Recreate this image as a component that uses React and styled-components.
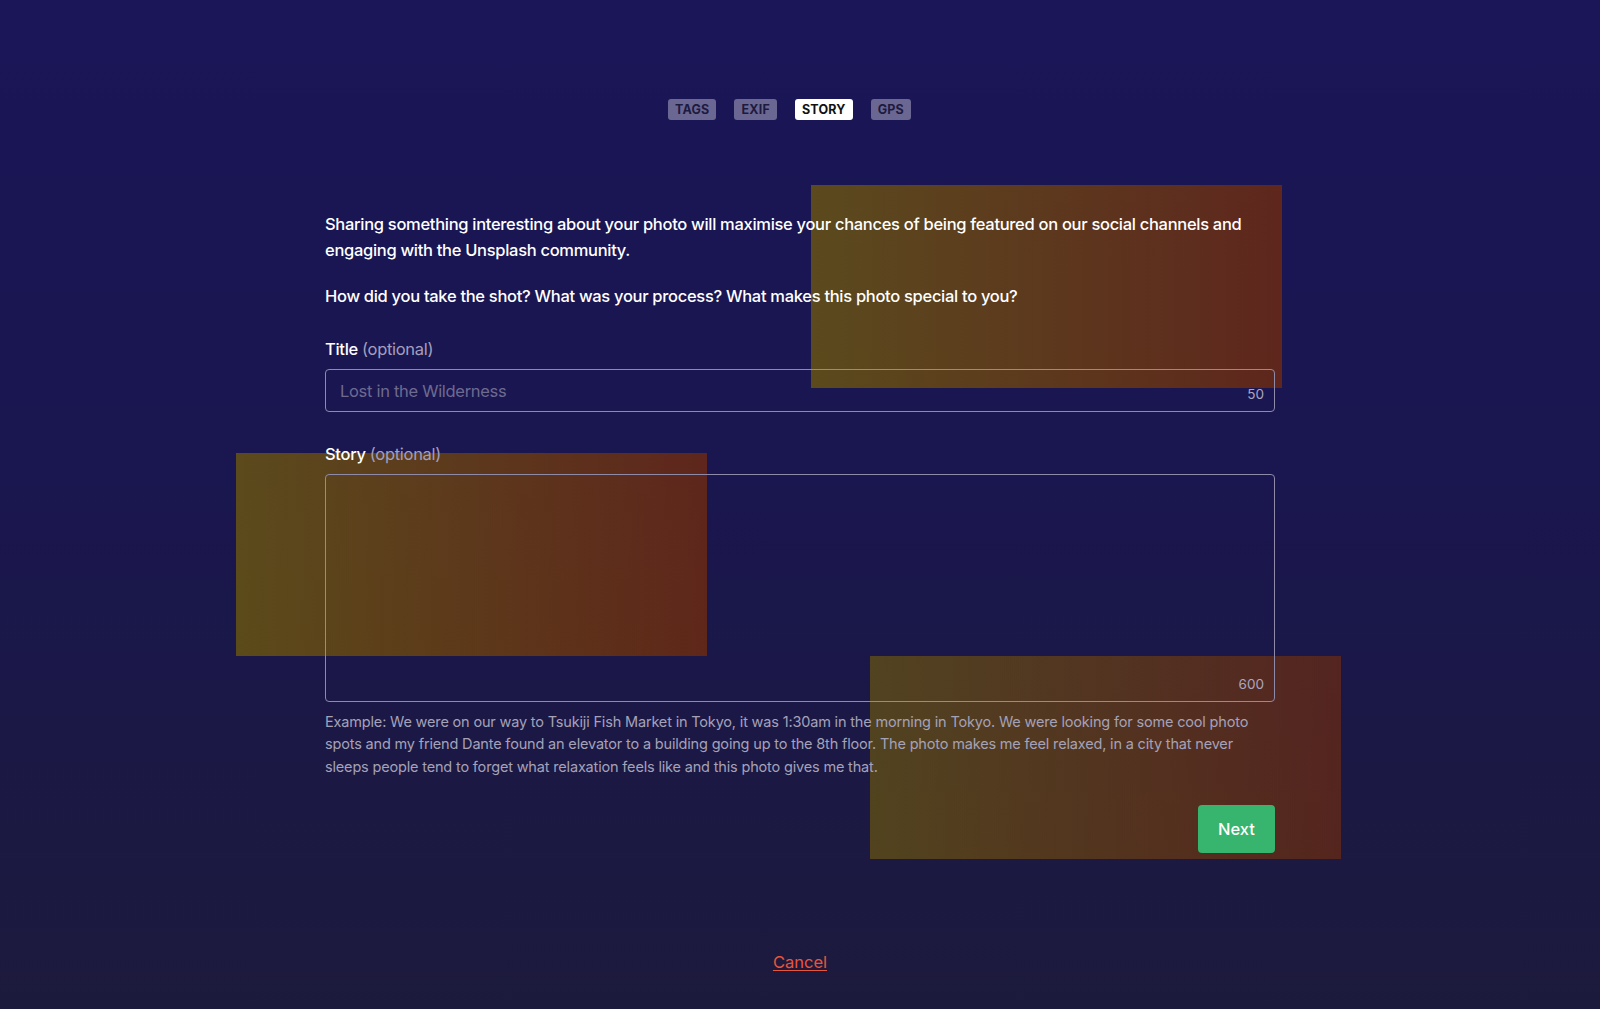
import React from "react";
import styled, { createGlobalStyle } from "styled-components";

const Global = createGlobalStyle`
  html, body { margin: 0; padding: 0; }
  body {
    font-family: Inter, "Noto Sans", "Liberation Sans", sans-serif;
    -webkit-font-smoothing: antialiased;
    background: #1b1745;
  }
  * { box-sizing: border-box; }
`;

const Page = styled.div`
  position: relative;
  min-height: 1009px;
  overflow: hidden;
  display: flex;
  flex-direction: column;
  align-items: center;
  background: linear-gradient(180deg, #1a1658 0%, #1a1650 45%, #1c1a3c 100%);
  color: #ffffff;
`;

const Decor = styled.div`
  position: absolute;
  z-index: 0;
  width: 471px;
  height: 203px;
  top: ${(p) => p.$top}px;
  left: calc(50% + ${(p) => p.$offset}px);
  background: linear-gradient(90deg, rgba(126, 102, 0, ${(p) => p.$alpha}) 0%, rgba(131, 47, 0, ${(p) => p.$alpha}) 100%);
`;

const Tabs = styled.nav`
  position: relative;
  z-index: 1;
  margin-top: 99px;
  margin-right: 21px;
  display: flex;
  gap: 18px;
`;

const Tab = styled.span`
  display: inline-flex;
  align-items: center;
  justify-content: center;
  height: 21px;
  padding: 0 7px;
  border-radius: 3px;
  font-size: 12.5px;
  font-weight: 700;
  letter-spacing: 0.2px;
  text-transform: uppercase;
  background: ${(p) => (p.$active ? "#ffffff" : "#6b6793")};
  color: ${(p) => (p.$active ? "#111111" : "#1d1a40")};
`;

const Form = styled.main`
  position: relative;
  z-index: 1;
  width: 950px;
  margin-top: 91px;
  display: flex;
  flex-direction: column;
`;

const Intro = styled.p`
  margin: 0 0 ${(p) => p.$gap}px;
  font-size: 16.5px;
  line-height: 26px;
  font-weight: 500;
  letter-spacing: -0.3px;
  color: #ffffff;
`;

const Label = styled.label`
  display: block;
  font-size: 16.5px;
  line-height: 26px;
  font-weight: 500;
  letter-spacing: -0.3px;
  color: #ffffff;
  margin-top: ${(p) => p.$top}px;
  margin-bottom: 7px;
`;

const Optional = styled.span`
  font-weight: 400;
  color: #a39fbd;
`;

const Field = styled.div`
  position: relative;
`;

const TextInput = styled.input`
  display: block;
  width: 100%;
  height: 43px;
  padding: 0 48px 0 14px;
  border: 1px solid #8e8aa8;
  border-radius: 4px;
  background: transparent;
  font-family: inherit;
  font-size: 16.5px;
  letter-spacing: -0.3px;
  color: #ffffff;
  outline: none;
  &::placeholder { color: #6e6a8f; }
`;

const TextArea = styled.textarea`
  display: block;
  width: 100%;
  height: 228px;
  padding: 12px 14px;
  border: 1px solid #8e8aa8;
  border-radius: 4px;
  background: transparent;
  font-family: inherit;
  font-size: 16.5px;
  color: #ffffff;
  resize: none;
  outline: none;
`;

const Counter = styled.span`
  position: absolute;
  right: 11px;
  bottom: ${(p) => p.$bottom}px;
  font-size: 13.5px;
  line-height: 16px;
  color: #aaa7c0;
`;

const Example = styled.p`
  margin: 9px 0 0;
  font-size: 14.5px;
  line-height: 22.4px;
  letter-spacing: -0.17px;
  color: #a5a2b8;
`;

const Actions = styled.div`
  display: flex;
  justify-content: flex-end;
  margin-top: 27px;
`;

const NextButton = styled.button`
  height: 48px;
  width: 77px;
  border: none;
  border-radius: 4px;
  background: #37b46d;
  color: #ffffff;
  font-family: inherit;
  font-size: 16.5px;
  font-weight: 500;
  cursor: pointer;
`;

const Cancel = styled.a`
  position: relative;
  z-index: 1;
  margin-top: 96px;
  font-size: 16.5px;
  line-height: 26px;
  color: #ea553a;
  text-decoration: underline;
  text-underline-offset: 2px;
  cursor: pointer;
`;

export default function App() {
  return (
    <>
      <Global />
      <Page>
        <Decor $top={185} $offset={11} $alpha={0.65} />
        <Decor $top={453} $offset={-564} $alpha={0.65} />
        <Decor $top={656} $offset={70} $alpha={0.55} />

        <Tabs>
          <Tab>Tags</Tab>
          <Tab>Exif</Tab>
          <Tab $active>Story</Tab>
          <Tab>GPS</Tab>
        </Tabs>

        <Form>
          <Intro $gap={20}>
            Sharing something interesting about your photo will maximise your chances of being featured on our social
            channels and engaging with the Unsplash community.
          </Intro>
          <Intro $gap={0}>How did you take the shot? What was your process? What makes this photo special to you?</Intro>

          <Label $top={27}>
            Title <Optional>(optional)</Optional>
          </Label>
          <Field>
            <TextInput placeholder="Lost in the Wilderness" />
            <Counter $bottom={10}>50</Counter>
          </Field>

          <Label $top={29}>
            Story <Optional>(optional)</Optional>
          </Label>
          <Field>
            <TextArea />
            <Counter $bottom={10}>600</Counter>
          </Field>

          <Example>
            Example: We were on our way to Tsukiji Fish Market in Tokyo, it was 1:30am in the morning in Tokyo. We were
            looking for some cool photo spots and my friend Dante found an elevator to a building going up to the 8th
            floor. The photo makes me feel relaxed, in a city that never sleeps people tend to forget what relaxation
            feels like and this photo gives me that.
          </Example>

          <Actions>
            <NextButton>Next</NextButton>
          </Actions>
        </Form>

        <Cancel>Cancel</Cancel>
      </Page>
    </>
  );
}
